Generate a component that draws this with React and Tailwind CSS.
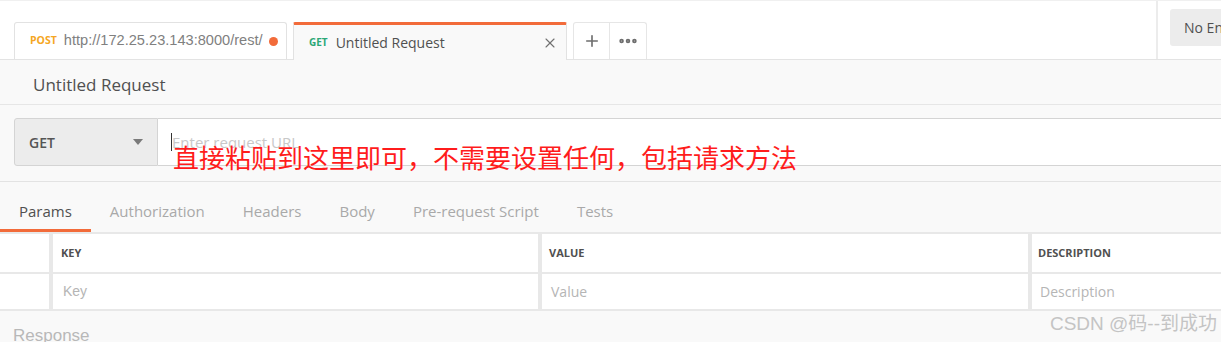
import { X, Plus, MoreHorizontal } from 'lucide-react';

const sans = { fontFamily: '"Open Sans", "Noto Sans", sans-serif' };

const tabs = ['Params', 'Authorization', 'Headers', 'Body', 'Pre-request Script', 'Tests'];

const App = () => {
  return (
    <div
      className="relative w-[1221px] h-[342px] overflow-hidden bg-[#f9f9f9] text-[#505050]"
      style={sans}
    >
      {/* Tab bar */}
      <header className="flex h-[60px] bg-white border-t border-[#f0f0f0] border-b border-b-[#e3e3e3]">
        <div className="flex-1 flex items-end pl-[14px]">
          <div className="flex items-center w-[273px] h-[37px] pl-[15px] pr-[8px] bg-white border border-b-0 border-[#e2e2e2] rounded-t-[3px]">
            <span className="text-[10.5px] font-bold text-[#f5a623] mr-[7px]">POST</span>
            <span
              className="text-[14.6px] text-[#808080] flex-1 truncate"
              style={{ fontFamily: '"Liberation Sans", Arial, sans-serif' }}
            >
              http://172.25.23.143:8000/rest/
            </span>
            <span className="w-[9px] h-[9px] rounded-full bg-[#f26b3a]" />
          </div>
          <div className="ml-[6px] -mb-px flex items-center w-[274px] h-[38px] pl-[15px] pr-[8px] bg-[#f9f9f9] border-t-[3px] border-t-[#f26b3a] border-x border-x-[#e2e2e2] rounded-t-[2px]">
            <span className="text-[10px] font-bold text-[#2aa776] mr-[8px]">GET</span>
            <span className="text-[14px] text-[#505050] flex-1">Untitled Request</span>
            <X className="w-[16px] h-[16px] text-[#707070]" strokeWidth={1.6} />
          </div>
          <div className="ml-[6px] flex h-[37px] border border-b-0 border-[#e6e6e6] rounded-t-[3px] bg-white">
            <div className="w-[36px] flex items-center justify-center border-r border-[#e6e6e6]">
              <Plus className="w-[18px] h-[18px] text-[#6e6e6e]" strokeWidth={2.2} />
            </div>
            <div className="w-[36px] flex items-center justify-center">
              <MoreHorizontal className="w-[22px] h-[22px] text-[#6e6e6e]" strokeWidth={3} />
            </div>
          </div>
        </div>
        <div className="w-[65px] border-l-2 border-[#ececec] pl-[12px] pt-[8px]">
          <div className="h-[37px] w-[80px] bg-[#ececec] rounded-[3px] pl-[14px] flex items-center text-[14px] whitespace-nowrap">
            No Environment
          </div>
        </div>
      </header>

      {/* Title */}
      <div className="h-[45px] flex items-center pt-[6px] pl-[33px] border-b border-[#e6e6e6] text-[17px]">
        Untitled Request
      </div>

      {/* URL row */}
      <div className="pt-[13px] pb-[15px] pl-[14px] border-b border-[#e3e3e3]">
        <div className="flex h-[48px]">
          <div className="w-[144px] flex items-center justify-between pl-[14px] pr-[14px] bg-[#ececec] border border-[#d4d4d4] rounded-l-[3px]">
            <span className="text-[14px] font-semibold text-[#555555]">GET</span>
            <svg width="10" height="6" viewBox="0 0 10 6">
              <path d="M0 0h10L5 6z" fill="#7a7a7a" />
            </svg>
          </div>
          <div className="flex-1 flex items-center bg-white border-y border-[#d4d4d4] pl-[13px]">
            <span className="w-px h-[18px] bg-[#333333]" />
            <span className="text-[15px] text-[#c8c8c8]">Enter request URL</span>
          </div>
        </div>
      </div>

      {/* Request tabs */}
      <nav className="flex h-[50px] items-end">
        {tabs.map((t, i) => (
          <div
            key={t}
            className={`px-[19px] pb-[7px] text-[15px] border-b-[3px] ${
              i === 0 ? 'border-[#f26b3a] text-[#505050]' : 'border-transparent text-[#a9a9a9]'
            }`}
          >
            {t}
          </div>
        ))}
      </nav>

      {/* Params table */}
      <div className="grid grid-cols-[49px_485px_486px_1fr] gap-x-[4px] gap-y-[2px] py-[2px] bg-[#e8e8e8]">
        <div className="h-[38px] bg-white" />
        <div className="h-[38px] bg-white flex items-center pl-[8px] text-[11px] font-bold">KEY</div>
        <div className="h-[38px] bg-white flex items-center pl-[7px] text-[11px] font-bold">VALUE</div>
        <div className="h-[38px] bg-white flex items-center pl-[6px] text-[11px] font-bold">DESCRIPTION</div>
        <div className="h-[35px] bg-white" />
        <div
          className="h-[35px] bg-white flex items-center pl-[10px] text-[14px] text-[#b5b5b5]"
          style={{ fontFamily: '"Liberation Sans", Arial, sans-serif' }}
        >
          Key
        </div>
        <div className="h-[35px] bg-white flex items-center pl-[9px] text-[14px] text-[#b5b5b5]">Value</div>
        <div className="h-[35px] bg-white flex items-center pl-[8px] text-[14px] text-[#b5b5b5]">Description</div>
      </div>

      <div
        className="pl-[13px] pt-[12px] text-[17px] text-[#b8b8b8]"
        style={{ fontFamily: '"Liberation Sans", Arial, sans-serif' }}
      >
        Response
      </div>

      {/* Red annotation */}
      <div
        className="absolute left-[173px] top-[144px] text-[26px] leading-none text-[#ff1c1c] whitespace-nowrap"
        style={{ fontFamily: '"Noto Sans CJK SC", sans-serif' }}
      >
        直接粘贴到这里即可，不需要设置任何，包括请求方法
      </div>

      {/* Watermark */}
      <div
        className="absolute right-[4px] top-[310px] text-[19px] text-[#c4c4c4] whitespace-nowrap"
        style={{ fontFamily: '"Liberation Sans", "Noto Sans CJK SC", sans-serif' }}
      >
        CSDN @码--到成功
      </div>
    </div>
  );
};

export default App;
